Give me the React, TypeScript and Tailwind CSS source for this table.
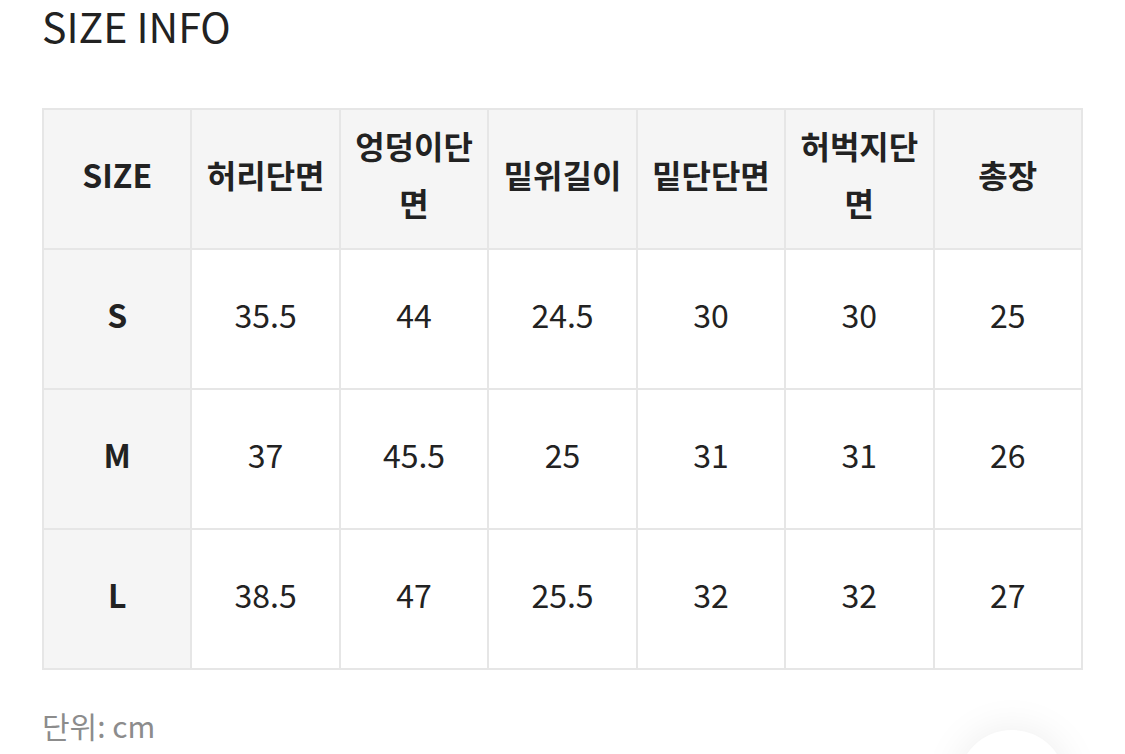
import React from 'react'

const headers = ['SIZE', '허리단면', '엉덩이단면', '밑위길이', '밑단단면', '허벅지단면', '총장']

const rows = [
  { size: 'S', values: ['35.5', '44', '24.5', '30', '30', '25'] },
  { size: 'M', values: ['37', '45.5', '25', '31', '31', '26'] },
  { size: 'L', values: ['38.5', '47', '25.5', '32', '32', '27'] },
]

const App = () => {
  return (
    <div className="relative h-[754px] w-full overflow-hidden bg-white font-['Noto_Sans_CJK_KR','Noto_Sans',sans-serif] text-[#222]">
      <div className="px-[42px]">
        {/* Title */}
        <h2 className="text-[41px] leading-[50px] font-normal">SIZE INFO</h2>

        {/* Size table */}
        <table className="mt-[58px] w-[1041px] table-fixed border-collapse">
          <thead>
            <tr className="h-[140px] bg-[#f5f5f5]">
              {headers.map((h) => (
                <th
                  key={h}
                  className="border-2 border-[#e6e6e6] px-[7px] pb-[10px] text-center align-middle text-[32px] leading-[57px] font-bold break-all"
                >
                  {h}
                </th>
              ))}
            </tr>
          </thead>
          <tbody>
            {rows.map((r) => (
              <tr key={r.size} className="h-[140px]">
                <td className="border-2 border-[#e6e6e6] bg-[#f5f5f5] pb-[10px] text-center align-middle text-[32px] font-bold">
                  {r.size}
                </td>
                {r.values.map((v, i) => (
                  <td
                    key={i}
                    className="border-2 border-[#e6e6e6] pb-[10px] text-center align-middle text-[32px] font-normal"
                  >
                    {v}
                  </td>
                ))}
              </tr>
            ))}
          </tbody>
        </table>

        {/* Unit note */}
        <p className="mt-[35px] text-[30px] leading-[40px] text-[#8c8c8c]">단위: cm</p>
      </div>

      {/* Floating button, mostly off-screen */}
      <div className="absolute left-[958px] top-[730px] h-[108px] w-[108px] rounded-full bg-white shadow-[0_0_40px_rgba(0,0,0,0.08)]" />
    </div>
  )
}

export default App
